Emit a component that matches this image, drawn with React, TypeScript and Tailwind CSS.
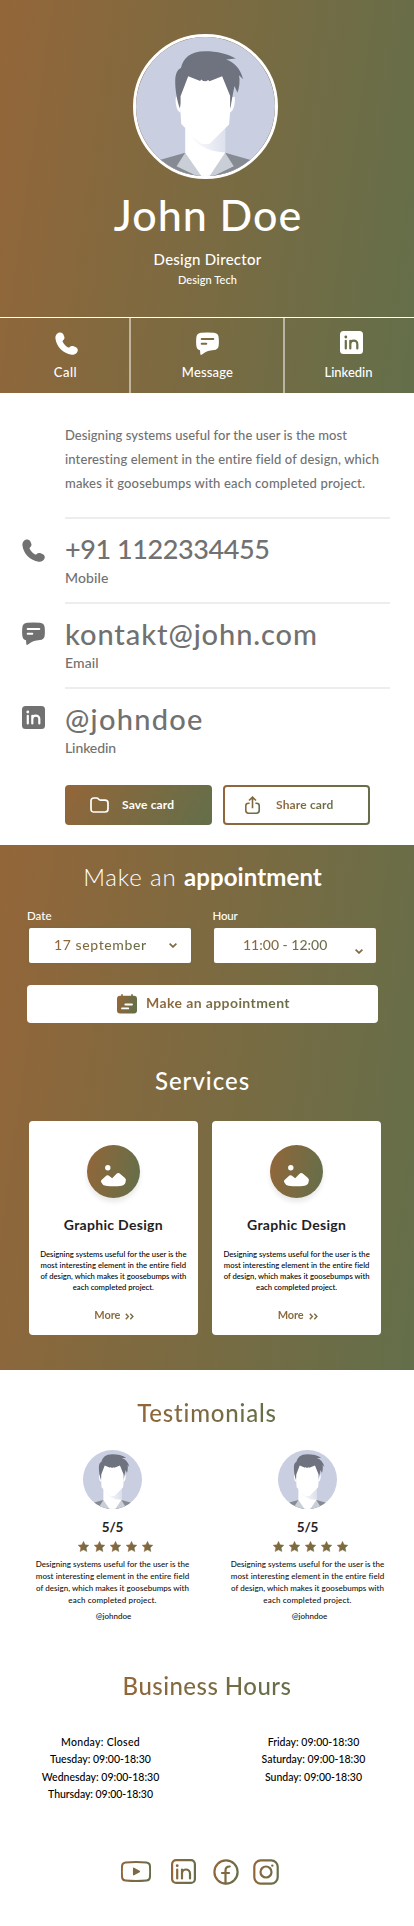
import React from 'react';

const textGradient = 'bg-[linear-gradient(100deg,#936639,#636F4A)] bg-clip-text text-transparent';

function Gradient({ id, w, h }: { id: string; w: number; h: number }) {
  return (
    <defs>
      <linearGradient id={id} gradientUnits="userSpaceOnUse" x1="0" y1={h * 0.4} x2={w} y2={h * 0.6}>
        <stop offset="0" stopColor="#936639" />
        <stop offset="1" stopColor="#636F4A" />
      </linearGradient>
    </defs>
  );
}

function Portrait({ id, viewBox, className }: { id: string; viewBox: string; className: string }) {
  return (
    <svg viewBox={viewBox} className={className}>
      <defs>
        <linearGradient id={id} x1="0" x2="1">
          <stop offset="0.1" stopColor="#ffffff" />
          <stop offset="1" stopColor="#dde1ed" />
        </linearGradient>
      </defs>
      <rect x="0" y="0" width="520" height="520" fill="#c9cee1" />
      <path d="M195 383 L110 407 L150 480 H360 L400 407 L315 383Z" fill="#868a93" />
      <path d="M195 383 L169 424 L236 456 H274 L341 424 L315 383Z" fill="#caced7" />
      <path d="M195 300 V383 L247 458 H265 L315 383 V300Z" fill="#fff" />
      <path d="M195 314 Q236 380 315 382 V308 L268 356 H243Z" fill={`url(#${id})`} />
      <path d="M181 263 C169 258 164 235 167 215 L185 217Z M329 263 C341 258 346 235 344 215 L328 217Z" fill="#fff" />
      <path
        d="M179 250 C170 225 164 190 165 163 C166 145 172 132 182 128 C190 98 210 78 255 78 C290 78 325 86 347 100 Q332 101 318 103 C345 112 361 132 369 162 L357 150 C360 168 358 188 352 203 L343 182 C338 208 334 228 331 250 L322 200 H190Z"
        fill="#6f737f"
      />
      <path
        d="M204 153 L181 213 V262 L183 297 L240 353 Q256 359 268 355 L327 298 L330 262 V212 L306 153 L268 168 L264 164 L258 168 L249 167 L243 163 L240 167Z"
        fill="#fff"
      />
    </svg>
  );
}

function PhoneIcon() {
  return (
    <svg viewBox="0 0 23 23" className="size-[23px] shrink-0" fill="currentColor">
      <path d="M4.2.6C5.8 0 7.7.8 8.4 2.4L9.3 4.7C9.8 6.1 9.100 7.300 8.100 8.300 7.500 8.900 7.500 9.500 7.900 10.200 9.100 12.400 11 14.200 13.100 15.400 13.700 15.700 14.200 15.700 14.700 15.100 15.600 14.100 16.800 13.600 18.100 14.100L20.900 15.300C22.400 16 23.100 17.600 22.600 19.200 21.700 21.700 19.400 23.100 16.700 22.700 8.100 21.500 1.500 14.900.4 6.300.1 3.800 1.600 1.500 4.200.6Z" />
    </svg>
  );
}

function MessageIcon({ line }: { line: string }) {
  return (
    <svg viewBox="0 0 23 23" className="size-[23px] shrink-0" fill="currentColor">
      <path d="M5 .7Q11.5.1 18 .7 22.100 1.100 22.600 5 23.200 9.500 22.600 14 22 17.700 18 18.100 14 18.400 12 19 9.500 19.800 6 22.600 4.300 23.700 4.300 21.800L4 18.300Q.9 17.700.4 14-.2 9.500.4 5 1 1.100 5 .7Z" />
      <path d="M5.7 7H17.300M5.7 11.700H10.300" stroke={line} strokeWidth="2" strokeLinecap="round" />
    </svg>
  );
}

function LinkedinIcon({ line }: { line: string }) {
  return (
    <svg viewBox="0 0 23 23" className="size-[23px] shrink-0" fill="none">
      <rect width="23" height="23" rx="3.5" fill="currentColor" />
      <circle cx="5.8" cy="6" r="1.4" fill={line} />
      <path d="M5.8 9.800V17.500M10.300 9.800V17.500M10.300 13C10.300 8.800 17.300 8.400 17.300 13V17.500" stroke={line} strokeWidth="2.2" strokeLinecap="round" />
    </svg>
  );
}

function Chevron() {
  return (
    <svg viewBox="0 0 8 5" className="h-[5px] w-2" fill="none" stroke="#7c6a41" strokeWidth="1.7">
      <path d="M.6.7 4 3.9 7.4.7" />
    </svg>
  );
}

const contacts = [
  { icon: <div className="pt-5"><PhoneIcon /></div>, value: '+91 1122334455', label: 'Mobile', valueClass: 'text-[27px] tracking-[-0.42px]', labelClass: 'tracking-[0.1px]' },
  { icon: <div className="pt-[18px]"><MessageIcon line="#fff" /></div>, value: 'kontakt@john.com', label: 'Email', valueClass: 'text-[29px] tracking-[0.91px]', labelClass: 'tracking-[0.1px]' },
  { icon: <div className="pt-[17px]"><LinkedinIcon line="#fff" /></div>, value: '@johndoe', label: 'Linkedin', valueClass: 'text-[29px] tracking-[1.28px]', labelClass: 'tracking-[-0.1px]' },
];

function ServiceCard({ id }: { id: string }) {
  return (
    <div className="flex h-[214px] flex-col items-center rounded bg-white pt-6">
      <div className="flex size-[53.3px] shrink-0 items-center justify-center rounded-full bg-[linear-gradient(100deg,#936639,#636F4A)] shadow-[0_4px_5px_rgba(0,0,0,0.09)]">
        <svg viewBox="0 0 53.3 53.3" className="size-full" fill="#fff">
          <circle cx="20.8" cy="22.8" r="2.7" />
          <path d="M14.3 35.3 18.6 31.2Q20.500 29.300 22.600 31.200L25.200 33.200 29.300 28.900Q31.300 26.900 33.300 28.900L38 32.900Q39.600 34.300 38.600 37 37.800 40.200 34.700 40.700 26.700 41.700 18.500 40.700 15.400 40.200 14.200 37.300 13.700 36 14.300 35.300Z" />
        </svg>
      </div>
      <h3 className="mt-[17px] text-[14px] leading-5 font-bold tracking-[0.3px] text-[#1f2124]">Graphic Design</h3>
      <div className="mt-[14px] text-center text-[7.7px] leading-[11px] whitespace-nowrap text-black">
        <p>Designing systems useful for the user is the</p>
        <p className="tracking-[0.04px]">most interesting element in the entire field</p>
        <p>of design, which makes it goosebumps with</p>
        <p>each completed project.</p>
      </div>
      <div className="mt-[14px] flex items-center gap-[5px] pl-0.5">
        <span className="bg-[linear-gradient(100deg,#936639,#7c6a41)] bg-clip-text text-[11px] leading-4 font-bold tracking-[-0.1px] text-transparent">More</span>
        <svg viewBox="0 0 9 7" className="mt-0.5 h-[7px] w-[9px]" fill="none" stroke={`url(#${id})`} strokeWidth="1.4">
          <Gradient id={id} w={9} h={7} />
          <path d="M.8.7 3.4 3.5.8 6.3M5.3.7 7.9 3.5 5.3 6.3" />
        </svg>
      </div>
    </div>
  );
}

function Testimonial({ id, handleClass }: { id: string; handleClass: string }) {
  return (
    <div className="flex flex-col items-center">
      <Portrait id={`${id}-neck`} viewBox="59 49 394 394" className="size-[59px] rounded-full" />
      <p className="mt-2 text-[13.5px] leading-5 font-bold tracking-[-0.2px] text-[#1f2124]">5/5</p>
      <svg viewBox="0 0 76 11" className="mt-1 ml-1.5 h-[11px] w-[76px]">
        <Gradient id={`${id}-star`} w={12} h={16} />
        {[0, 1, 2, 3, 4].map((n) => (
          <path
            key={n}
            transform={`translate(${n * 16} 0)`}
            d="M5.5.3 7.1 3.7 10.9 4.2 8.2 6.8 8.9 10.6 5.5 8.8 2.1 10.6 2.8 6.8.1 4.2 3.9 3.7Z"
            fill={`url(#${id}-star)`}
            stroke={`url(#${id}-star)`}
            strokeWidth=".4"
            strokeLinejoin="round"
          />
        ))}
      </svg>
      <div className="mt-[5.5px] text-center text-[8px] leading-3 whitespace-nowrap text-[#111]">
        <p className="tracking-[0.03px]">Designing systems useful for the user is the</p>
        <p className="tracking-[0.09px]">most interesting element in the entire field</p>
        <p className="tracking-[0.03px]">of design, which makes it goosebumps with</p>
        <p className="tracking-[0.17px]">each completed project.</p>
      </div>
      <p className={handleClass}>@johndoe</p>
    </div>
  );
}

export default function App() {
  return (
    <main className="h-[1926px] w-[414px] overflow-hidden bg-white font-['Lato','Open_Sans',sans-serif] font-medium">
      <header className="h-[393px] bg-[linear-gradient(98deg,#936639,#636F4A)] text-white">
        <div className="flex h-[317px] flex-col items-center pt-[34px]">
          <Portrait id="hero-neck" viewBox="47 35 418 418" className="mr-[3px] size-[145px] rounded-full border-3 border-white" />
          <h1 className="mt-3 pl-0.5 text-[43px] leading-[48px] tracking-[0.96px]">John Doe</h1>
          <p className="mt-2.5 pl-px text-[15px] leading-5 tracking-[0.25px]">Design Director</p>
          <p className="mt-[3px] pl-px text-[11px] leading-4 tracking-[0.08px]">Design Tech</p>
        </div>
        <nav className="grid h-[76px] grid-cols-[131px_154px_129px] border-t border-white text-[13px] leading-[18px]">
          <a className="flex flex-col items-center gap-2 border-r-2 border-white/50 pt-3.5 pl-1">
            <PhoneIcon />
            <span className="mr-0.5 tracking-[0.5px]">Call</span>
          </a>
          <a className="flex flex-col items-center gap-2 border-r-2 border-white/50 pt-3.5 pl-px">
            <MessageIcon line="#7c6a41" />
            <span className="tracking-[0.17px]">Message</span>
          </a>
          <a className="flex flex-col items-center gap-[9px] pt-[13px]">
            <span className="ml-1"><LinkedinIcon line="#6d6d47" /></span>
            <span className="mr-0.5">Linkedin</span>
          </a>
        </nav>
      </header>

      <section className="h-[452px] pt-[30px] text-[#717171]">
        <div className="pl-[65px] text-[13px] leading-6 whitespace-nowrap">
          <p className="tracking-[0.06px]">Designing systems useful for the user is the most</p>
          <p className="tracking-[0.13px]">interesting element in the entire field of design, which</p>
          <p className="tracking-[0.18px]">makes it goosebumps with each completed project.</p>
        </div>
        <div className="mt-[22px] pl-[22px]">
          {contacts.map((c) => (
            <div key={c.label} className="flex h-[85px]">
              <div className="w-[42.5px] pt-0.5">{c.icon}</div>
              <div className="w-[325.5px] border-t-2 border-[#ededed] pt-[12.5px] pl-[0.5px]">
                <p className={`leading-[34px] ${c.valueClass}`}>{c.value}</p>
                <p className={`mt-[3px] text-[14px] leading-[18px] ${c.labelClass}`}>{c.label}</p>
              </div>
            </div>
          ))}
        </div>
        <div className="mt-[13px] flex gap-[11px] pl-[65px] text-[12px] leading-4 font-bold">
          <button className="flex h-10 w-[147px] items-center rounded bg-[linear-gradient(120deg,#936639,#636F4A)] pl-[25px] text-white">
            <svg viewBox="0 0 19 16" className="h-4 w-[19px]" fill="none" stroke="currentColor" strokeWidth="1.7">
              <path d="M1 4Q1 1 4 1H6.5Q7.800 1 8.500 2.100 9.200 3.100 10.500 3.100H15Q18 3.100 18 6V12Q18 15 15 15H4Q1 15 1 12Z" />
            </svg>
            <span className="ml-[13px] tracking-[0.15px]">Save card</span>
          </button>
          <button className="h-10 w-[147px] rounded bg-[linear-gradient(110deg,#936639,#636F4A)] p-0.5">
            <span className="flex h-9 items-center rounded-[2px] bg-white pl-5">
              <svg viewBox="0 0 15 18" className="h-[18px] w-[15px]" fill="none" stroke="url(#share)" strokeWidth="1.6">
                <Gradient id="share" w={15} h={18} />
                <path d="M4.6 7.2H3.500Q.8 7.200.8 9.700V14.600Q.8 17.200 3.500 17.200H11.500Q14.200 17.200 14.200 14.600V9.700Q14.200 7.200 11.500 7.200H10.400M7.500 12.200V1.200M4 4.500 7.500 1.100 11 4.500" />
              </svg>
              <span className={`ml-4 tracking-[0.15px] ${textGradient}`}>Share card</span>
            </span>
          </button>
        </div>
      </section>

      <section className="h-[525px] bg-[linear-gradient(98deg,#936639,#636F4A)] pt-[17px] text-white">
        <h2 className="pr-[9px] text-center text-[24px] leading-[30px]">
          <span className="font-light tracking-[0.85px]">Make an </span>
          <span className="font-bold tracking-[0.1px]">appointment</span>
        </h2>
        <div className="mt-4 grid grid-cols-[185.5px_185px] pl-[27px] text-[11.5px] leading-4">
          <label>Date</label>
          <label className="tracking-[-0.2px]">Hour</label>
        </div>
        <div className="mt-1 flex gap-[23px] pl-[29px] text-[14px] leading-[18px]">
          <div className="flex h-[35px] w-[162px] items-center rounded-[2px] bg-white pr-3.5 pl-[25px] shadow-[0_0_3px_rgba(99,111,74,0.8)]">
            <span className={`mb-0.5 tracking-[0.6px] ${textGradient}`}>17 september</span>
            <span className="ml-auto"><Chevron /></span>
          </div>
          <div className="flex h-[35px] w-[162px] items-center rounded-[2px] bg-white pr-[13px] pl-[29px] shadow-[0_0_3px_rgba(147,102,57,0.8)]">
            <span className={`mb-0.5 ${textGradient}`}>11:00 - 12:00</span>
            <span className="mt-[11px] ml-auto"><Chevron /></span>
          </div>
        </div>
        <button className="mt-[21.5px] ml-[27px] flex h-[38.5px] w-[351px] items-center rounded bg-white pl-[90px] text-[14px] leading-[18px] font-bold">
          <svg viewBox="0 0 20 20" className="size-5" fill="none">
            <Gradient id="calendar" w={20} h={20} />
            <path d="M5 .8V4M15 .8V4" stroke="url(#calendar)" strokeWidth="1.6" strokeLinecap="round" />
            <rect y="1.7" width="20" height="17.8" rx="3" fill="url(#calendar)" />
            <path d="M8.3 10.5H15M5 14.400H11.300" stroke="#fff" strokeWidth="1.8" strokeLinecap="round" />
          </svg>
          <span className={`mb-0.5 ml-[9px] tracking-[0.4px] ${textGradient}`}>Make an appointment</span>
        </button>
        <h2 className="mt-[41.5px] pr-[9px] text-center text-[24px] leading-8 tracking-[1px]">Services</h2>
        <div className="mt-[24.5px] grid grid-cols-[168.7px_168.7px] gap-[14.6px] pl-[29px]">
          <ServiceCard id="more-a" />
          <ServiceCard id="more-b" />
        </div>
      </section>

      <section className="flex flex-col items-center pt-[26.5px]">
        <h2 className={`text-[24px] leading-8 tracking-[0.8px] ${textGradient}`}>Testimonials</h2>
        <div className="mt-[21.5px] grid w-full grid-cols-[195px_195px] pl-[15px]">
          <Testimonial id="first" handleClass="mt-1 ml-0.5 text-[8px] leading-3 text-[#111]" />
          <Testimonial id="second" handleClass="mt-1 ml-1 text-[8px] leading-3 text-[#111]" />
        </div>
      </section>

      <section className="flex flex-col items-center pt-12 text-black">
        <h2 className={`text-[24px] leading-8 tracking-[0.46px] ${textGradient}`}>Business Hours</h2>
        <div className="mt-8 grid h-[71px] w-full grid-cols-[201px_201px] gap-3 text-center text-[10.5px] leading-[17.6px]">
          <div>
            <p className="tracking-[0.3px]">Monday: Closed</p>
            <p>Tuesday: 09:00-18:30</p>
            <p>Wednesday: 09:00-18:30</p>
            <p className="tracking-[-0.05px]">Thursday: 09:00-18:30</p>
          </div>
          <div>
            <p>Friday: 09:00-18:30</p>
            <p>Saturday: 09:00-18:30</p>
            <p>Sunday: 09:00-18:30</p>
          </div>
        </div>
      </section>

      <footer className="mt-[54px] flex items-center pl-[121px]">
        <svg viewBox="0 0 30 21" className="h-[21px] w-[30px]" fill="none">
          <Gradient id="youtube" w={30} h={21} />
          <path d="M4.5 1.5Q15 .5 25.5 1.5 28.500 1.800 28.900 4.500 29.400 10.500 28.900 16.500 28.500 19.200 25.500 19.500 15 20.500 4.500 19.500 1.500 19.200 1.100 16.500.6 10.500 1.100 4.500 1.500 1.800 4.500 1.500Z" stroke="url(#youtube)" strokeWidth="2" />
          <path d="M12.7 7.3 18.3 10.5 12.7 13.7Z" fill="url(#youtube)" stroke="url(#youtube)" strokeWidth="1.5" strokeLinejoin="round" />
        </svg>
        <svg viewBox="0 0 25 25" className="ml-5 size-[25px]" fill="none" stroke="url(#linkedin)" strokeWidth="2.2">
          <Gradient id="linkedin" w={25} h={25} />
          <rect x="1.1" y="1.1" width="22.8" height="22.8" rx="4" />
          <path d="M6.2 10.5V19.500M11 10.500V19.500M11 14.500C11 9.300 19 9.100 19 14.500V19.500" strokeLinecap="round" />
          <circle cx="6.2" cy="6.7" r="1.4" fill="url(#linkedin)" stroke="none" />
        </svg>
        <svg viewBox="0 0 26 26" className="ml-[17px] size-[26px]" fill="none" stroke="url(#facebook)" strokeWidth="2.200">
          <Gradient id="facebook" w={26} h={26} />
          <circle cx="13" cy="13" r="11.6" />
          <path d="M12.5 24.5V11.500Q12.500 7.500 16.700 7.500M9 14H16" strokeLinecap="round" />
        </svg>
        <svg viewBox="0 0 26 26" className="ml-3.5 size-[26px]" fill="none" stroke="url(#instagram)" strokeWidth="2.2">
          <Gradient id="instagram" w={26} h={26} />
          <rect x="1.3" y="1.3" width="23.4" height="23.4" rx="6.5" />
          <circle cx="13" cy="13" r="5.5" />
          <circle cx="19.3" cy="6.6" r="1.2" fill="url(#instagram)" stroke="none" />
        </svg>
      </footer>
    </main>
  );
}
